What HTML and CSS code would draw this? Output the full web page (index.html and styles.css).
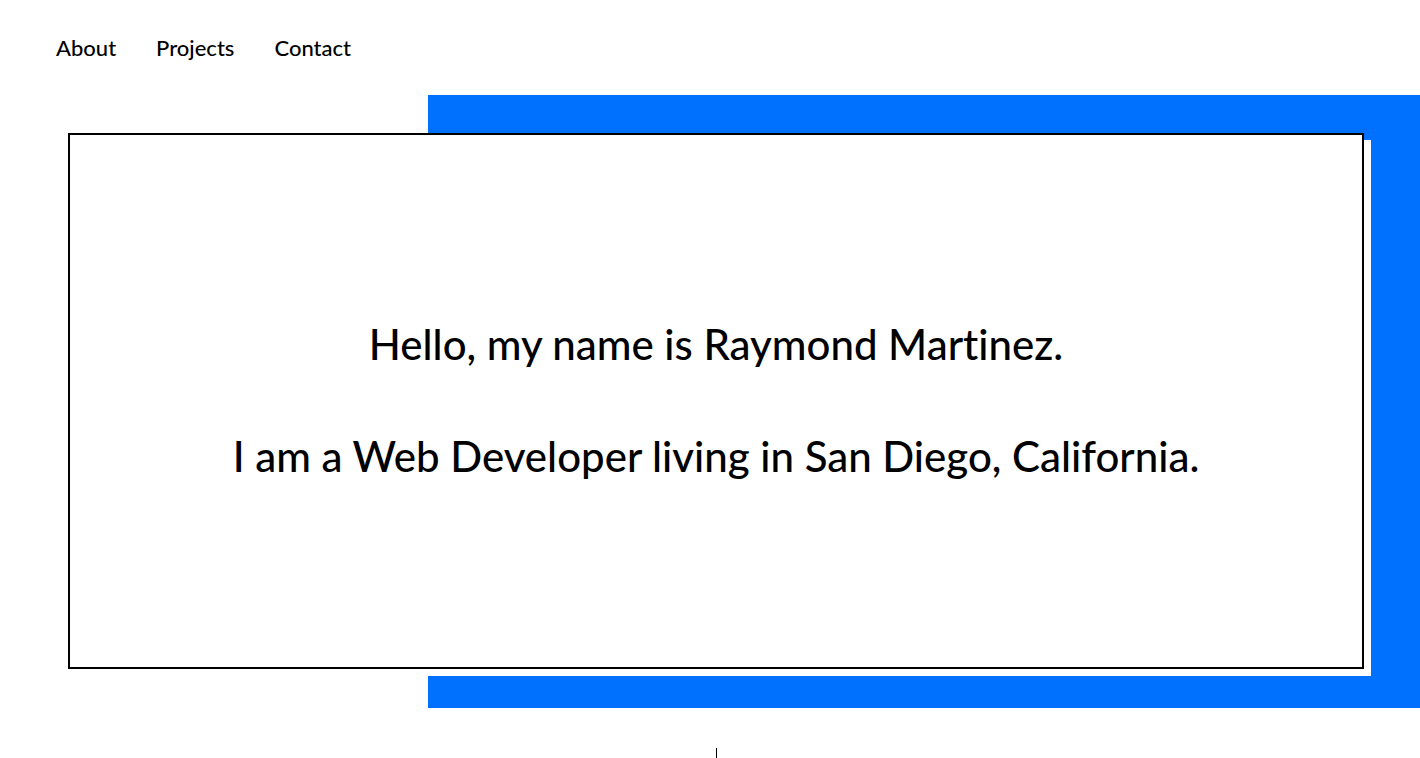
FILE: index.html
```html
<!DOCTYPE html>
<html lang="en">
<head>
<meta charset="utf-8">
<meta name="viewport" content="width=device-width, initial-scale=1">
<title>Raymond Martinez</title>
<link rel="stylesheet" href="styles.css">
</head>
<body>
<nav class="nav" aria-label="Main">
  <a class="nav-link" href="#about">About</a>
  <a class="nav-link" href="#projects">Projects</a>
  <a class="nav-link" href="#contact">Contact</a>
</nav>
<main class="hero">
  <div class="intro">
    <h1 class="intro-line">Hello, my name is Raymond Martinez.</h1>
    <p class="intro-line">I am a Web Developer living in San Diego, California.</p>
  </div>
</main>
<div class="divider"></div>
</body>
</html>
```
FILE: styles.css
```css
* {
  box-sizing: border-box;
}

body {
  display: flex;
  flex-direction: column;
  min-height: 100vh;
  margin: 0;
  background: #fff;
  color: #000;
  font-family: Lato, sans-serif;
  font-weight: 500;
  font-variant-ligatures: none;
}

.nav {
  display: flex;
  gap: 40px;
  padding: 32px 56px;
  font-size: 22px;
  line-height: 31px;
}

.nav-link {
  color: inherit;
  text-decoration: none;
}

.hero {
  display: flex;
  flex: 1;
  padding: 38px 56px 39px 68px;
  background: linear-gradient(#0071ff, #0071ff) right / calc(70% - 2px) 100% no-repeat;
}

.intro {
  display: flex;
  flex: 1;
  flex-direction: column;
  justify-content: center;
  gap: 56px;
  padding-bottom: 2px;
  border: 2px solid #000;
  background: #fff;
  box-shadow: 7px 7px 0 #fff;
  text-align: center;
}

.intro-line {
  margin: 0;
  font-size: 42px;
  font-weight: 500;
  line-height: 56px;
}

.divider {
  display: flex;
  justify-content: center;
  height: 50px;
  padding: 40px 56px 0 68px;
}

.divider::before {
  content: "";
  width: 1px;
  background: #000;
}
```
